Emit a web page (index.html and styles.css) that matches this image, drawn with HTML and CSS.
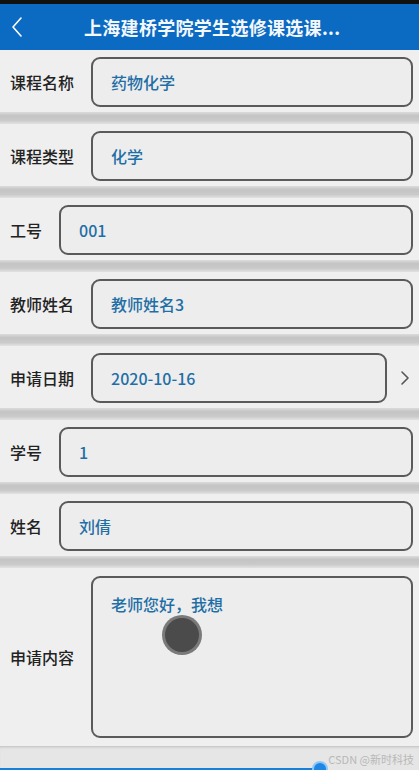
FILE: index.html
```html
<!DOCTYPE html>
<html lang="zh-CN">
<head>
  <meta charset="UTF-8" />
  <meta name="viewport" content="width=device-width, initial-scale=1.0"/>
  <title>选课申请</title>
  <link rel="stylesheet" href="styles.css">
</head>
<body>

<div class="topbar"></div>

<header class="header">
  <svg class="back" width="14" height="22" viewBox="0 0 14 22">
    <path d="M11 2 L3 11 L11 20" fill="none" stroke="#fff" stroke-width="1.6" stroke-linecap="round" stroke-linejoin="round"/>
  </svg>
  <h1 class="title">上海建桥学院学生选修课选课...</h1>
</header>

<main class="form">
  <div class="row">
    <span class="label">课程名称</span>
    <div class="field">药物化学</div>
  </div>
  <div class="sep"></div>
  <div class="row">
    <span class="label">课程类型</span>
    <div class="field">化学</div>
  </div>
  <div class="sep"></div>
  <div class="row">
    <span class="label">工号</span>
    <div class="field">001</div>
  </div>
  <div class="sep"></div>
  <div class="row">
    <span class="label">教师姓名</span>
    <div class="field">教师姓名3</div>
  </div>
  <div class="sep"></div>
  <div class="row row-arrow">
    <span class="label">申请日期</span>
    <div class="field">2020-10-16</div>
    <svg class="chevron" width="10" height="16" viewBox="0 0 10 16">
      <path d="M2 2 L8 8 L2 14" fill="none" stroke="#555" stroke-width="1.6" stroke-linecap="round" stroke-linejoin="round"/>
    </svg>
  </div>
  <div class="sep"></div>
  <div class="row">
    <span class="label">学号</span>
    <div class="field">1</div>
  </div>
  <div class="sep"></div>
  <div class="row">
    <span class="label">姓名</span>
    <div class="field">刘倩</div>
  </div>
  <div class="sep"></div>
  <div class="row row-area">
    <span class="label">申请内容</span>
    <div class="field area">
      老师您好，我想
      <span class="touch"></span>
    </div>
  </div>
</main>

<footer class="footer">
  <span class="watermark">CSDN @新时科技</span>
  <div class="progress">
    <span class="progress-bar"></span>
    <span class="progress-dot"></span>
  </div>
</footer>

</body>
</html>
```

FILE: styles.css
```css
html, body {
  margin: 0;
  padding: 0;
  height: 100%;
  overflow: hidden;
  background: #ebebeb;
  font-family: "Noto Sans CJK SC", "Noto Sans", sans-serif;
}

.topbar {
  height: 4px;
  background: #111;
}

.header {
  height: 46px;
  background: #0b6ac2;
  display: flex;
  align-items: center;
  position: relative;
}

.back {
  margin-left: 10px;
}

.title {
  margin: 0 0 0 60px;
  color: #f4f8fc;
  font-size: 18px;
  font-weight: 700;
  letter-spacing: 0.3px;
}

.form {
  display: flex;
  flex-direction: column;
}

.row {
  display: flex;
  align-items: center;
  gap: 17px;
  padding: 7px 6px 5px 10px;
  background: #efefef;
}

.label {
  font-size: 16px;
  font-weight: 500;
  color: #222;
  white-space: nowrap;
}

.field {
  flex: 1;
  height: 46px;
  display: flex;
  align-items: center;
  padding-left: 18px;
  border: 2px solid #5a5a5a;
  border-radius: 9px;
  background: #ededed;
  color: #1f6fa6;
  font-size: 16px;
  font-weight: 500;
}

.row-arrow {
  padding-right: 9px;
}

.row-arrow .field {
  margin-right: -4px;
}

.chevron {
  flex: none;
}

.sep {
  height: 12px;
  background: linear-gradient(#dcdcdc, #c4c4c4 30%, #cacaca 70%, #e2e2e2);
}

.row-area {
  padding-top: 8px;
  padding-bottom: 8px;
}

.field.area {
  height: 162px;
  align-items: flex-start;
  padding-top: 14px;
  box-sizing: border-box;
  position: relative;
}

.touch {
  position: absolute;
  left: 72px;
  top: 40px;
  width: 34px;
  height: 34px;
  border-radius: 50%;
  background: #4b4b4b;
  box-shadow: 0 0 0 3px #7a7a7a;
}

.footer {
  height: 25px;
  background: #e6e6e6;
  box-shadow: inset 0 3px 3px -2px #bdbdbd;
  position: relative;
}

.watermark {
  position: absolute;
  right: 5px;
  top: 5px;
  font-size: 11px;
  color: #b8b8b8;
}

.progress {
  position: absolute;
  left: 0;
  right: 0;
  bottom: 0;
  height: 3px;
}

.progress-bar {
  position: absolute;
  left: 0;
  bottom: 0;
  width: 320px;
  height: 3px;
  background: #1a7fd8;
}

.progress-dot {
  position: absolute;
  left: 314px;
  bottom: -4px;
  width: 12px;
  height: 12px;
  border-radius: 50%;
  background: #1d86e6;
  box-shadow: 0 0 0 2px #8fc6f3;
}
```
